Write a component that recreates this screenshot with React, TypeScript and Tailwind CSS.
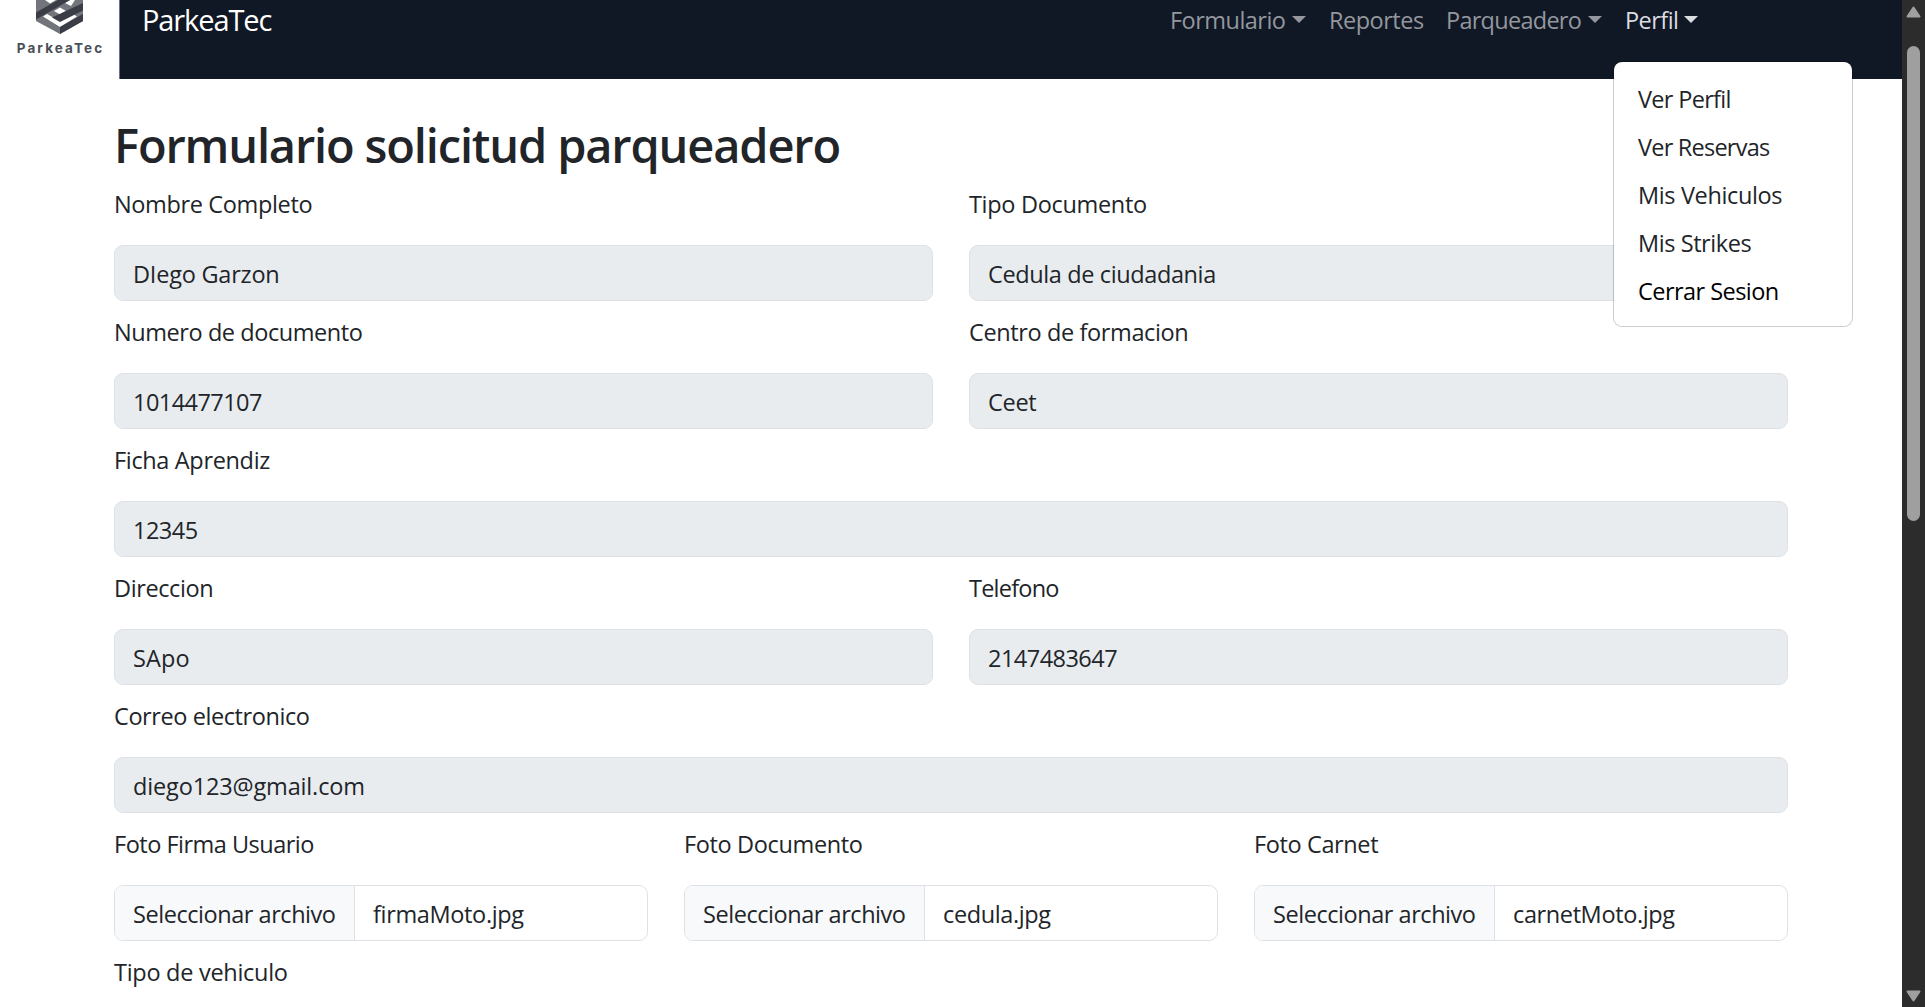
import React from 'react';

const TXT = "font-['Open_Sans','Noto_Sans',sans-serif] text-[23.5px] leading-9";

function Caret() {
  return (
    <svg className="mt-[16px] h-[7px] w-[14px]" viewBox="0 0 14 7" fill="currentColor">
      <path d="M0 0H14L7 7Z" />
    </svg>
  );
}

function Logo() {
  return (
    <div className="flex h-[79px] w-[120px] flex-col items-center border-r border-[#6b7080] bg-white">
      <svg className="h-[35px] w-[48px]" viewBox="36 0 48 35">
        <path d="M36 0H83V21L60 34L36 21Z" fill="#72757b" />
        <path d="M45 0H56L50 3.5ZM65 3L70 0H75L71 6Z" fill="#fff" />
        <path d="M43 16.5L47 14L60 21.5L73 14L77 16.5L60 27Z" fill="#fff" />
        <path d="M54 11L60 7.5L66 11L60 14.5Z" fill="#fff" />
        <path d="M36 12.5L58 0H70L36 19.5Z" fill="#3a3d46" />
        <path d="M83 3V10.5L60 22L52 17.5Z" fill="#3a3d46" />
        <path d="M60 34V27L83 14V21Z" fill="#3a3d46" />
      </svg>
      <span className="mt-[4px] pl-[2px] font-['Inter',sans-serif] text-[13.5px] font-bold leading-[18px] tracking-[2.1px] text-[#4b5058]">
        ParkeaTec
      </span>
    </div>
  );
}

function Label({ text, t }: { text: string; t: string }) {
  return <div className={`${TXT} h-9 whitespace-nowrap pt-px ${t}`}>{text}</div>;
}

function Field({ label, lt, value, vt }: { label: string; lt: string; value: string; vt: string }) {
  return (
    <div className="flex min-w-0 flex-1 flex-col gap-6">
      <Label text={label} t={lt} />
      <div className={`${TXT} flex h-14 items-center rounded-[9px] border border-[#dee2e6] bg-[#e9ecef] px-[18px] pt-px ${vt}`}>
        {value}
      </div>
    </div>
  );
}

function FileField({ label, lt, value, vt }: { label: string; lt: string; value: string; vt: string }) {
  return (
    <div className="flex min-w-0 flex-1 flex-col gap-6">
      <Label text={label} t={lt} />
      <div className={`${TXT} flex h-14 overflow-hidden rounded-[9px] border border-[#dee2e6] bg-white`}>
        <div className="flex w-[240px] items-center border-r border-[#dee2e6] bg-[#f8f9fa] pl-[18px] pt-px tracking-[-0.45px]">
          Seleccionar archivo
        </div>
        <div className={`flex items-center pl-[18px] pt-px ${vt}`}>{value}</div>
      </div>
    </div>
  );
}

const menu = [
  { text: 'Ver Perfil', t: 'tracking-[-0.68px] text-[#212529]' },
  { text: 'Ver Reservas', t: 'tracking-[-0.77px] text-[#212529]' },
  { text: 'Mis Vehiculos', t: 'tracking-[-0.36px] text-[#212529]' },
  { text: 'Mis Strikes', t: 'tracking-[-0.42px] text-[#212529]' },
  { text: 'Cerrar Sesion', t: 'tracking-[-0.54px] text-black' },
];

export default function App() {
  return (
    <div className="relative flex h-[1007px] w-[1925px] overflow-hidden bg-white text-[#212529]">
      <div className="w-[1902px]">
        <header className="flex h-[79px] bg-[#101725]">
          <Logo />
          <div className="ml-[22px] mt-[-3px] font-['Open_Sans',sans-serif] text-[29px] leading-[45px] tracking-[-1.1px] text-white">
            ParkeaTec
          </div>
          <nav className={`${TXT} ml-auto mr-[203px] flex text-[#94979d]`}>
            <div className="flex w-[158px] gap-[7px]">
              <span className="mt-[2px] tracking-[-0.53px]">Formulario</span>
              <Caret />
            </div>
            <div className="w-[118px] pl-px">
              <div className="mt-[2px] tracking-[-0.5px]">Reportes</div>
            </div>
            <div className="flex w-[179px] gap-[7px]">
              <span className="mt-[2px] tracking-[-0.73px]">Parqueadero</span>
              <Caret />
            </div>
            <div className="flex w-[74px] gap-[6px] text-[#dcdde0]">
              <span className="mt-[2px] tracking-[-0.54px]">Perfil</span>
              <Caret />
            </div>
          </nav>
        </header>
        <main className="ml-[114px] w-[1674px] pt-[37px]">
          <h1 className="h-[69px] whitespace-nowrap font-['Open_Sans',sans-serif] text-[47px] font-semibold leading-[58px] tracking-[-1.16px]">
            Formulario solicitud parqueadero
          </h1>
          <form className="flex flex-col gap-3">
            <div className="flex gap-9">
              <Field label="Nombre Completo" lt="tracking-[-0.36px]" value="DIego Garzon" vt="tracking-[-0.22px]" />
              <Field label="Tipo Documento" lt="tracking-[-0.32px]" value="Cedula de ciudadania" vt="tracking-[-0.38px]" />
            </div>
            <div className="flex gap-9">
              <Field label="Numero de documento" lt="tracking-[-0.43px]" value="1014477107" vt="tracking-[-0.55px]" />
              <Field label="Centro de formacion" lt="tracking-[-0.38px]" value="Ceet" vt="tracking-[-0.3px]" />
            </div>
            <Field label="Ficha Aprendiz" lt="tracking-[-0.34px]" value="12345" vt="tracking-[-0.5px]" />
            <div className="flex gap-9">
              <Field label="Direccion" lt="tracking-[-0.4px]" value="SApo" vt="tracking-[0.1px]" />
              <Field label="Telefono" lt="tracking-[-0.78px]" value="2147483647" vt="tracking-[-0.53px]" />
            </div>
            <Field label="Correo electronico" lt="tracking-[-0.42px]" value="diego123@gmail.com" vt="tracking-[-0.15px]" />
            <div className="flex gap-9">
              <FileField label="Foto Firma Usuario" lt="tracking-[-0.5px]" value="firmaMoto.jpg" vt="tracking-[-0.35px]" />
              <FileField label="Foto Documento" lt="tracking-[-0.36px]" value="cedula.jpg" vt="tracking-[-0.38px]" />
              <FileField label="Foto Carnet" lt="tracking-[-0.38px]" value="carnetMoto.jpg" vt="tracking-[-0.38px]" />
            </div>
            <Label text="Tipo de vehiculo" t="tracking-[-0.28px]" />
          </form>
        </main>
      </div>

      <div className="flex w-[23px] flex-col items-center bg-[#2c2c2c]">
        <svg className="mt-[6px] h-[12px] w-[15px]" viewBox="0 0 15 12">
          <path d="M7.5 1.5L13.5 10.5H1.5Z" fill="#9f9f9f" stroke="#9f9f9f" strokeWidth="2" strokeLinejoin="round" />
        </svg>
        <div className="mt-[28px] h-[475px] w-[13px] rounded-full bg-[#9f9f9f]" />
        <svg className="mb-[5px] mt-auto h-[12px] w-[15px]" viewBox="0 0 15 12">
          <path d="M7.5 10.5L13.5 1.5H1.5Z" fill="#9f9f9f" stroke="#9f9f9f" strokeWidth="2" strokeLinejoin="round" />
        </svg>
      </div>

      <div className="absolute left-[1613px] top-[61px] flex h-[266px] w-[240px] flex-col rounded-[9px] border border-black/20 bg-white bg-clip-padding pl-[24px] pt-[13px]">
        {menu.map((m) => (
          <div key={m.text} className={`${TXT} h-12 py-1.5 ${m.t}`}>
            {m.text}
          </div>
        ))}
      </div>
    </div>
  );
}
